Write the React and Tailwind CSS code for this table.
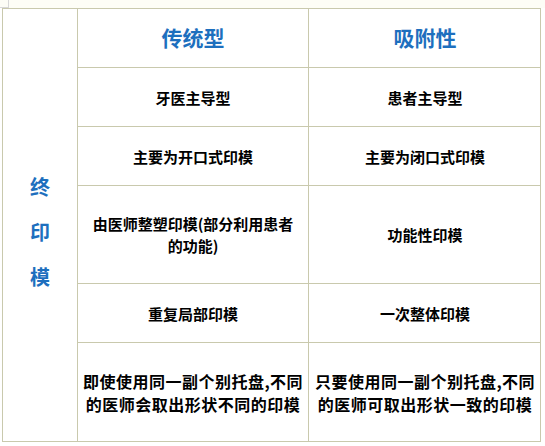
import React from "react";

const rows = [
  { a: ["牙医主导型"], b: ["患者主导型"], h: "h-[59px]" },
  { a: ["主要为开口式印模"], b: ["主要为闭口式印模"], h: "h-[59px]" },
  { a: ["由医师整塑印模(部分利用患者", "的功能)"], b: ["功能性印模"], h: "h-[98px]" },
  { a: ["重复局部印模"], b: ["一次整体印模"], h: "h-[59px]" },
  {
    a: ["即使使用同一副个别托盘,不同", "的医师会取出形状不同的印模"],
    b: ["只要使用同一副个别托盘,不同", "的医师可取出形状一致的印模"],
    h: "h-[98px]",
    big: true,
  },
];

function Cell({ lines, h, last, right, big }) {
  return (
    <div
      className={`${h} border-[#c9c9ad] ${right ? "" : "border-r"} ${last ? "" : "border-b"} flex flex-col items-center justify-center gap-[1px] text-center font-bold text-black whitespace-nowrap ${big ? "text-[16px] leading-[22px] tracking-[0.5px]" : "text-[15px] leading-[21px]"}`}
    >
      {lines.map((l, i) => (
        <span key={i}>{l}</span>
      ))}
    </div>
  );
}

export default function App() {
  return (
    <div
      className="w-[545px] h-[446px] bg-white overflow-hidden"
      style={{ fontFamily: '"Noto Sans CJK SC", "Noto Sans", sans-serif' }}
    >
      <div className="h-[8px] bg-[#fdfdf6]">
        <div className="w-[9px] h-[8px] border-r border-b border-[#d8d8d8]" />
      </div>
      <div className="ml-[2px] w-[539px] grid grid-cols-[75px_231px_232px] border border-[#c9c9ad]">
        <div className="row-span-6 border-r border-[#c9c9ad] flex flex-col items-center justify-center gap-[20px] pt-[12px] text-[20px] font-bold text-[#1d6fbe] leading-[25px]">
          <span>终</span>
          <span>印</span>
          <span>模</span>
        </div>
        <div className="h-[59px] border-r border-b border-[#c9c9ad] flex items-center justify-center text-[21px] font-bold text-[#1d6fbe]">
          传统型
        </div>
        <div className="h-[59px] border-b border-[#c9c9ad] flex items-center justify-center text-[21px] font-bold text-[#1d6fbe]">
          吸附性
        </div>
        {rows.map((r, i) => (
          <React.Fragment key={i}>
            <Cell lines={r.a} h={r.h} last={i === rows.length - 1} big={r.big} />
            <Cell lines={r.b} h={r.h} last={i === rows.length - 1} big={r.big} right />
          </React.Fragment>
        ))}
      </div>
    </div>
  );
}
